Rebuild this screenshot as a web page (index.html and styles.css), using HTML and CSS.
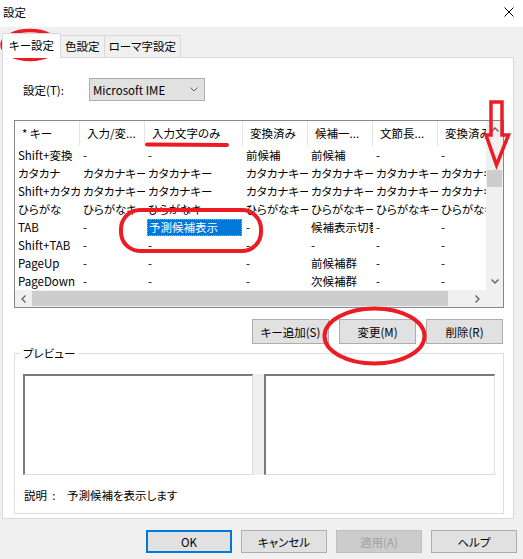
FILE: index.html
```html
<!DOCTYPE html>
<html lang="ja">
<head>
    <meta charset="UTF-8">
    <title>設定</title>
    <link rel="stylesheet" href="styles.css">
</head>
<body>
<div class="window">
    <div class="titlebar">
        <span class="title">設定</span>
        <svg class="close" width="10" height="10" viewBox="0 0 10 10"><path d="M0.5 0.5L9.5 9.5M9.5 0.5L0.5 9.5" stroke="#000" stroke-width="1" fill="none"/></svg>
    </div>

    <div class="tabs">
        <div class="tab active">キー設定</div>
        <div class="tab">色設定</div>
        <div class="tab">ローマ字設定</div>
    </div>

    <div class="panel">
        <div class="setting-row">
            <span class="setting-label">設定(T):</span>
            <div class="select">
                <span>Microsoft IME</span>
                <svg width="8" height="5" viewBox="0 0 8 5"><path d="M0.5 0.5L4 4L7.5 0.5" stroke="#606060" fill="none"/></svg>
            </div>
        </div>

        <div class="listview">
            <div class="lv-main">
                <div class="lv-view">
                    <div class="lv-row lv-head">
                        <div>* キー</div><div>入力/変...</div><div>入力文字のみ</div><div>変換済み</div><div>候補一...</div><div>文節長...</div><div>変換済み</div>
                    </div>
                    <div class="lv-row">
                        <div>Shift+変換</div><div>-</div><div>-</div><div>前候補</div><div>前候補</div><div>-</div><div>-</div>
                    </div>
                    <div class="lv-row">
                        <div>カタカナ</div><div>カタカナキー</div><div>カタカナキー</div><div>カタカナキー</div><div>カタカナキー</div><div>カタカナキー</div><div>カタカナキー</div>
                    </div>
                    <div class="lv-row">
                        <div>Shift+カタカナ</div><div>カタカナキー</div><div>カタカナキー</div><div>カタカナキー</div><div>カタカナキー</div><div>カタカナキー</div><div>カタカナキー</div>
                    </div>
                    <div class="lv-row">
                        <div>ひらがな</div><div>ひらがなキー</div><div>ひらがなキー</div><div>ひらがなキー</div><div>ひらがなキー</div><div>ひらがなキー</div><div>ひらがなキー</div>
                    </div>
                    <div class="lv-row">
                        <div>TAB</div><div>-</div><div class="sel"><span>予測候補表示</span></div><div>-</div><div>候補表示切替</div><div>-</div><div>-</div>
                    </div>
                    <div class="lv-row">
                        <div>Shift+TAB</div><div>-</div><div>-</div><div>-</div><div>-</div><div>-</div><div>-</div>
                    </div>
                    <div class="lv-row">
                        <div>PageUp</div><div>-</div><div>-</div><div>-</div><div>前候補群</div><div>-</div><div>-</div>
                    </div>
                    <div class="lv-row">
                        <div>PageDown</div><div>-</div><div>-</div><div>-</div><div>次候補群</div><div>-</div><div>-</div>
                    </div>
                </div>
                <div class="vscroll">
                    <div class="sb-btn"><svg width="8" height="5" viewBox="0 0 8 5"><path d="M0.5 4.5L4 1L7.5 4.5" stroke="#606060" stroke-width="1.3" fill="none"/></svg></div>
                    <div class="vtrack"><div class="vthumb"></div></div>
                    <div class="sb-btn"><svg width="8" height="5" viewBox="0 0 8 5"><path d="M0.5 0.5L4 4L7.5 0.5" stroke="#606060" stroke-width="1.3" fill="none"/></svg></div>
                </div>
            </div>
            <div class="hscroll">
                <div class="sb-btn"><svg width="5" height="8" viewBox="0 0 5 8"><path d="M4.5 0.5L1 4L4.5 7.5" stroke="#606060" stroke-width="1.3" fill="none"/></svg></div>
                <div class="htrack"><div class="hthumb"></div></div>
                <div class="sb-btn"><svg width="5" height="8" viewBox="0 0 5 8"><path d="M0.5 0.5L4 4L0.5 7.5" stroke="#606060" stroke-width="1.3" fill="none"/></svg></div>
                <div class="corner"></div>
            </div>
        </div>

        <div class="btn-row">
            <div class="btn">キー追加(S)</div>
            <div class="btn">変更(M)</div>
            <div class="btn">削除(R)</div>
        </div>

        <div class="group">
            <div class="group-label">プレビュー</div>
            <div class="preview">
                <div class="pv-box pv-left"></div>
                <div class="splitter"></div>
                <div class="pv-box pv-right"></div>
            </div>
            <div class="desc">
                <span class="desc-label">説明&nbsp;&nbsp;:</span>
                <span>予測候補を表示します</span>
            </div>
        </div>
    </div>

    <div class="footer">
        <div class="btn default">OK</div>
        <div class="btn">キャンセル</div>
        <div class="btn disabled">適用(A)</div>
        <div class="btn">ヘルプ</div>
    </div>

    <!-- red marks drawn over the screenshot -->
    <svg class="marks" width="523" height="559" viewBox="0 0 523 559">
        <g stroke="#ed1c24" fill="none">
            <ellipse cx="30" cy="45" rx="28" ry="14.5" stroke-width="3.5"/>
            <path d="M147 144.5L227 145" stroke-width="4" stroke-linecap="round"/>
            <rect x="121" y="210" width="140" height="41" rx="19" stroke-width="4"/>
            <ellipse cx="374.5" cy="336" rx="50" ry="27.5" stroke-width="4"/>
            <path d="M491 102L502 102L502 135L508.5 135L496.5 165L486 135L491 135Z" stroke-width="3.5" stroke-linejoin="miter"/>
        </g>
    </svg>
</div>
</body>
</html>
```

FILE: styles.css
```css
* {
    box-sizing: border-box;
}
body {
    margin: 0;
    background: #f0f0f0;
    font-family: "Noto Sans CJK JP", "Noto Sans", sans-serif;
    font-size: 11.5px;
    font-feature-settings: "palt";
    color: #000;
}
.window {
    position: relative;
    width: 523px;
    height: 559px;
    overflow: hidden;
}
.titlebar {
    height: 27px;
    background: #fff;
    display: flex;
    align-items: center;
    justify-content: space-between;
    padding: 0 9px 4px 3px;
}
.title {
    line-height: 16px;
}
.tabs {
    display: flex;
    align-items: flex-end;
    height: 30px;
    padding-left: 2px;
}
.tab {
    height: 22px;
    line-height: 20px;
    padding: 0 4px;
    border: 1px solid #d9d9d9;
    border-bottom: none;
    background: #f0f0f0;
    margin-left: -1px;
}
.tab.active {
    height: 25px;
    line-height: 22px;
    padding: 0 6px;
    margin-left: 0;
    margin-bottom: -1px;
    background: #fff;
    position: relative;
    z-index: 1;
}
.panel {
    width: 512px;
    height: 462px;
    margin-left: 2px;
    background: #fff;
    border: 1px solid #d9d9d9;
    padding: 20px 9px 0 11px;
}
.setting-row {
    display: flex;
    align-items: center;
    height: 23px;
    padding-left: 9px;
}
.setting-label {
    width: 66px;
}
.select {
    width: 116px;
    height: 23px;
    border: 1px solid #adadad;
    background: #e1e1e1;
    display: flex;
    align-items: center;
    justify-content: space-between;
    padding: 0 6px 0 3px;
}
.listview {
    margin-top: 19px;
    width: 490px;
    height: 188px;
    border: 1px solid #828790;
    background: #fff;
}
.lv-main {
    display: flex;
    height: 169px;
}
.lv-view {
    width: 471px;
    overflow: hidden;
}
.lv-row {
    display: grid;
    grid-template-columns: 65px 65px 98px 65px 65px 65px 65px;
    height: 18px;
    line-height: 18px;
}
.lv-row > div {
    overflow: hidden;
    white-space: nowrap;
    padding-left: 3px;
}
.lv-head {
    height: 25px;
    line-height: 25px;
}
.lv-head > div {
    padding-left: 7px;
    border-right: 1px solid #e5e5e5;
}
.lv-row > .sel {
    padding: 1px 1px 0 2px;
}
.sel span {
    display: block;
    height: 17px;
    line-height: 17px;
    padding-left: 2px;
    background: #0078d7;
    color: #fff;
    outline: 1px dotted #f0a030;
    outline-offset: -1px;
}
.vscroll {
    width: 17px;
    background: #f0f0f0;
    display: flex;
    flex-direction: column;
}
.sb-btn {
    flex: none;
    width: 17px;
    height: 17px;
    display: flex;
    align-items: center;
    justify-content: center;
}
.vtrack {
    flex: 1;
}
.vthumb {
    margin: 32px 0 0 1px;
    width: 15px;
    height: 17px;
    background: #cdcdcd;
}
.hscroll {
    display: flex;
    height: 17px;
    background: #f0f0f0;
}
.htrack {
    flex: 1;
}
.hthumb {
    width: 416px;
    height: 15px;
    margin-top: 1px;
    background: #cdcdcd;
}
.corner {
    width: 17px;
}
.btn-row {
    display: flex;
    justify-content: flex-end;
    gap: 10px;
    margin-top: 11px;
    padding-right: 1px;
}
.btn {
    width: 77px;
    height: 25px;
    border: 1px solid #adadad;
    background: #e1e1e1;
    display: flex;
    align-items: center;
    justify-content: center;
}
.group {
    margin-top: 9px;
    width: 490px;
    height: 161px;
    border: 1px solid #dcdcdc;
    padding: 0 7px 0 8px;
}
.group-label {
    width: fit-content;
    margin: -9px 0 0 -3px;
    padding: 0 3px;
    background: #fff;
    line-height: 16px;
}
.preview {
    display: flex;
    margin-top: 13px;
    height: 101px;
}
.pv-box {
    background: #fff;
    border-top: 2px solid #7a7a7a;
    border-left: 2px solid #7a7a7a;
    border-right: 1px solid #dcdcdc;
    border-bottom: 1px solid #dcdcdc;
}
.pv-left {
    width: 230px;
}
.splitter {
    width: 11px;
    background: #f0f0f0;
}
.pv-right {
    width: 231px;
}
.desc {
    display: flex;
    margin-top: 12px;
    line-height: 16px;
    padding-left: 1px;
}
.desc-label {
    width: 43px;
}
.footer {
    display: flex;
    justify-content: flex-end;
    gap: 9px;
    padding: 11px 6px 0 0;
}
.footer .btn {
    width: 86px;
    height: 23px;
}
.btn.default {
    border: 2px solid #0078d7;
}
.btn.disabled {
    background: #cccccc;
    border-color: #bfbfbf;
    color: #a0a0a0;
}
.marks {
    position: absolute;
    top: 0;
    left: 0;
    pointer-events: none;
}
```
